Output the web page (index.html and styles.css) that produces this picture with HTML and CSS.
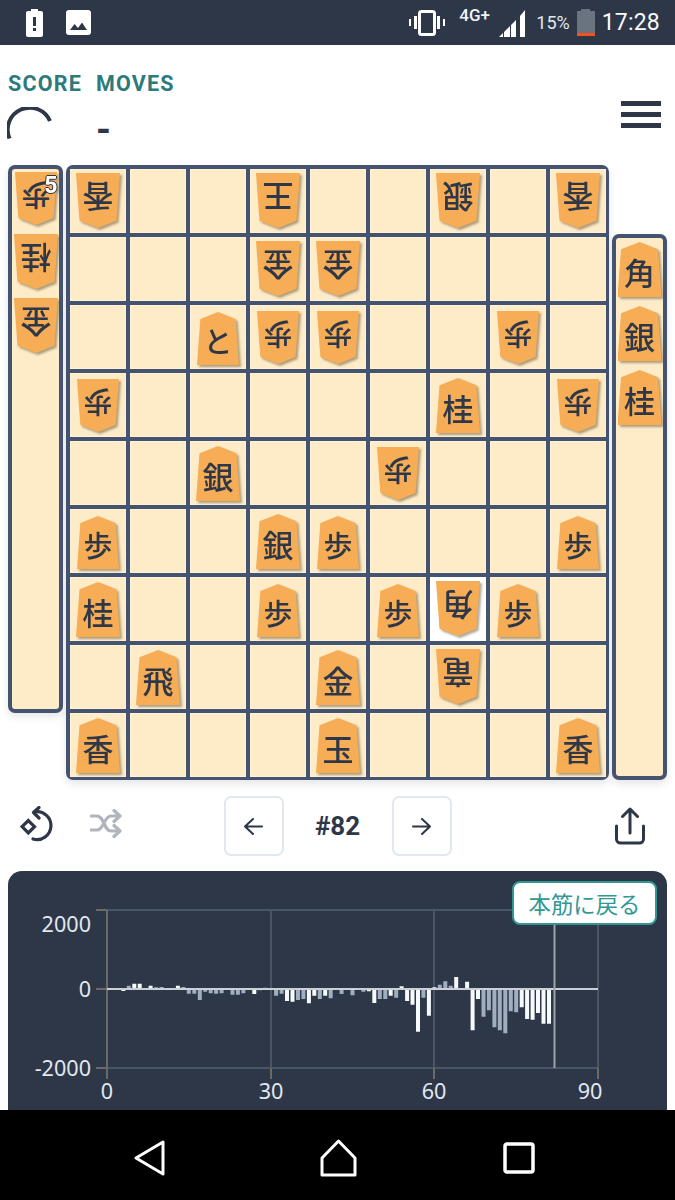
FILE: index.html
```html
<!DOCTYPE html>
<html lang="ja">
<head>
<meta charset="utf-8">
<title>Shogi</title>
<link rel="stylesheet" href="styles.css">
</head>
<body>
<div class="statusbar">
  <svg class="st-alert" width="17" height="28" viewBox="0 0 17 28"><path fill="#fff" d="M5 0h7v2h3a2 2 0 0 1 2 2v22a2 2 0 0 1-2 2H2a2 2 0 0 1-2-2V4a2 2 0 0 1 2-2h3z"/><path fill="#2d3748" d="M7 8h3v9H7zM7 19h3v3H7z"/></svg>
  <svg class="st-image" width="25" height="25" viewBox="0 0 25 25"><rect width="25" height="25" rx="3" fill="#fff"/><path fill="#2d3748" d="M4 20l4.500-6 3.500 4 4-5.500 5 7.500z"/></svg>
  <div class="spacer"></div>
  <svg class="st-vib" width="36" height="27" viewBox="0 0 36 27"><rect x="10.500" y="2.500" width="15" height="23" rx="2" fill="none" stroke="#fff" stroke-width="3"/><path fill="#fff" d="M5 7h3v13H5zM28 7h3v13h-3zM0 10h2v7H0zM34 10h2v7h-2z"/></svg>
  <span class="st-net">4G+</span>
  <svg class="st-signal" width="26" height="27" viewBox="0 0 26 27"><path fill="#fff" d="M0 27l4-4v4zM5 22l6-6v11H5zM12 15l5-5v17h-5zM21 6l5-6v27h-5z"/></svg>
  <span class="st-pct">15%</span>
  <svg class="st-batt" width="18" height="27" viewBox="0 0 18 27"><path fill="#6b7280" d="M4 0h9v2h5v22H0V2h4z"/><path fill="#f4511e" d="M0 24h18v3H0z"/></svg>
  <span class="st-time">17:28</span>
</div>

<header class="header">
  <div class="stats">
    <div class="stat stat-score">
      <div class="stat-label">SCORE</div>
      <svg class="spinner" width="46" height="34" viewBox="0 0 46 34"><path d="M2.500 31.500A22 22 0 0 1 43 14" fill="none" stroke="#2d3748" stroke-width="4"/></svg>
    </div>
    <div class="stat">
      <div class="stat-label">MOVES</div>
      <div class="stat-value">-</div>
    </div>
  </div>
  <div class="burger"><i></i><i></i><i></i></div>
</header>

<main class="game">
  <div class="stand stand-left">
    <div class="piece pawn gote"><span>歩</span><b class="count">5</b></div>
    <div class="piece gote"><span>桂</span></div>
    <div class="piece gote"><span>金</span></div>
  </div>
  <div class="board">
    <div class="cell"><div class="piece gote"><span>香</span></div></div><div class="cell"></div><div class="cell"></div><div class="cell"><div class="piece gote"><span>王</span></div></div><div class="cell"></div><div class="cell"></div><div class="cell"><div class="piece gote"><span>銀</span></div></div><div class="cell"></div><div class="cell"><div class="piece gote"><span>香</span></div></div>
    <div class="cell"></div><div class="cell"></div><div class="cell"></div><div class="cell"><div class="piece gote"><span>金</span></div></div><div class="cell"><div class="piece gote"><span>金</span></div></div><div class="cell"></div><div class="cell"></div><div class="cell"></div><div class="cell"></div>
    <div class="cell"></div><div class="cell"></div><div class="cell"><div class="piece pawn"><span>と</span></div></div><div class="cell"><div class="piece pawn gote"><span>歩</span></div></div><div class="cell"><div class="piece pawn gote"><span>歩</span></div></div><div class="cell"></div><div class="cell"></div><div class="cell"><div class="piece pawn gote"><span>歩</span></div></div><div class="cell"></div>
    <div class="cell"><div class="piece pawn gote"><span>歩</span></div></div><div class="cell"></div><div class="cell"></div><div class="cell"></div><div class="cell"></div><div class="cell"></div><div class="cell"><div class="piece"><span>桂</span></div></div><div class="cell"></div><div class="cell"><div class="piece pawn gote"><span>歩</span></div></div>
    <div class="cell"></div><div class="cell"></div><div class="cell"><div class="piece"><span>銀</span></div></div><div class="cell"></div><div class="cell"></div><div class="cell"><div class="piece pawn gote"><span>歩</span></div></div><div class="cell"></div><div class="cell"></div><div class="cell"></div>
    <div class="cell"><div class="piece pawn"><span>歩</span></div></div><div class="cell"></div><div class="cell"></div><div class="cell"><div class="piece"><span>銀</span></div></div><div class="cell"><div class="piece pawn"><span>歩</span></div></div><div class="cell"></div><div class="cell"></div><div class="cell"></div><div class="cell"><div class="piece pawn"><span>歩</span></div></div>
    <div class="cell"><div class="piece"><span>桂</span></div></div><div class="cell"></div><div class="cell"></div><div class="cell"><div class="piece pawn"><span>歩</span></div></div><div class="cell"></div><div class="cell"><div class="piece pawn"><span>歩</span></div></div><div class="cell cell-hl"><div class="piece gote"><span>角</span></div></div><div class="cell"><div class="piece pawn"><span>歩</span></div></div><div class="cell"></div>
    <div class="cell"></div><div class="cell"><div class="piece"><span>飛</span></div></div><div class="cell"></div><div class="cell"></div><div class="cell"><div class="piece"><span>金</span></div></div><div class="cell"></div><div class="cell"><div class="piece gote"><span>竜</span></div></div><div class="cell"></div><div class="cell"></div>
    <div class="cell"><div class="piece"><span>香</span></div></div><div class="cell"></div><div class="cell"></div><div class="cell"></div><div class="cell"><div class="piece"><span>玉</span></div></div><div class="cell"></div><div class="cell"></div><div class="cell"></div><div class="cell"><div class="piece"><span>香</span></div></div>
  </div>
  <div class="stand stand-right">
    <div class="piece"><span>角</span></div>
    <div class="piece"><span>銀</span></div>
    <div class="piece"><span>桂</span></div>
  </div>
</main>

<nav class="toolbar">
  <div class="tools-left">
    <svg width="36" height="36" viewBox="0 0 36 36" fill="none" stroke="#2d3748" stroke-width="3.200"><path d="M2.100 20.700L8.300 14.500l6.200 6.200-6.200 6.200z"/><path d="M15 5.700A14 14 0 1 1 13 33" stroke-linecap="round"/><path d="M19 1.500L13.500 6.500 19 12" stroke-linecap="round" stroke-linejoin="round"/></svg>
    <svg class="shuffle" width="32" height="30" viewBox="0 0 32 30" fill="none" stroke="#b0b5bc" stroke-width="3.200" stroke-linecap="round" stroke-linejoin="round"><path d="M1 7h6c7 0 7 15 14 15h8M1 21h6c3 0 5-3 7-7s4-7 7-7h8"/><path d="M24 1.500l6 5.500-6 5.500M24 16.500l6 5.500-6 5.500"/></svg>
  </div>
  <div class="pager">
    <button class="page-btn"><svg width="19" height="17" viewBox="0 0 19 17" fill="none" stroke="#2d3748" stroke-width="2" stroke-linecap="round" stroke-linejoin="round"><path d="M1 8.500h17M9 1L1 8.500 9 16"/></svg></button>
    <span class="page-no">#82</span>
    <button class="page-btn"><svg width="19" height="17" viewBox="0 0 19 17" fill="none" stroke="#2d3748" stroke-width="2" stroke-linecap="round" stroke-linejoin="round"><path d="M1 8.500h17M10 1l8 7.500L10 16"/></svg></button>
  </div>
  <svg class="share" width="32" height="38" viewBox="0 0 32 38" fill="none" stroke="#2d3748" stroke-width="3" stroke-linecap="round" stroke-linejoin="round"><path d="M16 2v24M8.500 9.500L16 2l7.500 7.500"/><path d="M2.500 19v13a4 4 0 0 0 4 4h19a4 4 0 0 0 4-4V19"/></svg>
</nav>

<section class="chart">
  <button class="return-btn">本筋に戻る</button>
  <svg class="chart-svg" width="659" height="239" viewBox="8 871 659 239">
    <g class="grid">
      <path d="M107 910H598M107 1068H598M271 910V1068M434 910V1068M598 910V1068"/>
    </g>
    <g class="ticks">
      <path d="M96 910H107M96 989H107M96 1068H107M107 910V1079M271 1068V1079M434 1068V1079M598 1068V1079"/>
    </g>
    <path class="bars-gray" d="M128.800 989V985.700M145.200 989V988M156.100 989V987.300M161.600 989V987M172.500 989V988M183.400 989V987M188.800 989V993.700M194.300 989V993.700M199.800 989V1000M205.200 989V991.700M210.700 989V993.300M216.100 989V993.700M221.600 989V993.300M227 989V988M232.500 989V994.700M237.900 989V994.700M243.400 989V993.300M248.900 989V989.700M259.800 989V990.300M265.200 989V987.700M276.100 989V995.700M281.600 989V993.700M298 989V1000M303.400 989V999M319.800 989V999M330.700 989V998.300M341.600 989V994M352.500 989V995.300M363.400 989V991.700M379.800 989V999M385.300 989V999M396.200 989V997.700M423.400 989V997.700M439.800 989V984.700M445.300 989V981.300M450.700 989V985.700M483.500 989V1016.700M488.900 989V1010.300M494.400 989V1027.300M499.800 989V1030.300M505.300 989V1033.300M510.800 989V1011.300M516.200 989V1012.300"/>
    <path class="bars-white" d="M112.500 989V989.500M123.400 989V991M134.300 989V983.700M139.700 989V983.700M150.600 989V985.700M177.900 989V985.700M254.300 989V994M287 989V1001M292.500 989V1001.700M308.900 989V1003.300M314.300 989V995.700M325.200 989V995.700M368.900 989V991.300M374.300 989V1003M390.700 989V995.700M401.600 989V986.300M407.100 989V1001M412.500 989V1004.700M418 989V1031.700M428.900 989V1015.700M434.400 989V987.300M456.200 989V977M467.100 989V981.700M472.600 989V1030.300M478 989V999M521.700 989V1007.300M527.100 989V1019M532.600 989V1019.700M538 989V1013M543.500 989V1023.700M549 989V1023.700"/>
    <path class="zero" d="M107 989H598"/>
    <path class="marker" d="M554.500 910V1068"/>
    <g class="ylabels">
      <text x="91" y="932">2000</text>
      <text x="91" y="997">0</text>
      <text x="91" y="1076">-2000</text>
    </g>
    <g class="xlabels">
      <text x="107" y="1099">0</text>
      <text x="271" y="1099">30</text>
      <text x="434" y="1099">60</text>
      <text x="590" y="1099">90</text>
    </g>
  </svg>
</section>

<footer class="navbar">
  <svg width="32" height="36" viewBox="0 0 32 36" fill="none" stroke="#fff" stroke-width="3" stroke-linejoin="round"><path d="M3 18L30 2v32z"/></svg>
  <svg class="nav-home" width="39" height="38" viewBox="0 0 39 38" fill="none" stroke="#fff" stroke-width="3" stroke-linejoin="round"><path d="M19.500 2L36 19v17H3V19z"/></svg>
  <svg width="32" height="32" viewBox="0 0 32 32" fill="none" stroke="#fff" stroke-width="3.500"><rect x="2" y="2" width="28" height="28" rx="2"/></svg>
</footer>
</body>
</html>
```

FILE: styles.css
```css
* { box-sizing: border-box; }
html, body { margin: 0; padding: 0; }
body {
  width: 675px;
  height: 1200px;
  overflow: hidden;
  background: #fff;
  color: #2d3748;
  font-family: Roboto, "Noto Sans CJK JP", sans-serif;
}

/* status bar */
.statusbar {
  height: 45px;
  background: #2d3748;
  color: #fff;
  display: flex;
  align-items: flex-start;
  padding: 9px 15px 0 26px;
}
.statusbar svg { display: block; flex: none; }
.st-image { margin: 1px 0 0 23px; }
.spacer { flex: 1; }
.st-net { margin: -4px 0 0 14px; font-size: 17px; font-weight: 500; line-height: 20px; color: #f1f5f9; width: 33px; white-space: nowrap; }
.st-signal { margin: 1px 0 0 7px; }
.st-pct { margin: 2px 0 0 11px; font-size: 18px; line-height: 24px; color: #e2e8f0; }
.st-batt { margin: 0 0 0 7px; }
.st-time { margin: 0 0 0 7px; font-size: 23px; line-height: 28px; letter-spacing: .2px; color: #f8fafc; }

/* header */
.header {
  height: 120px;
  display: flex;
  justify-content: space-between;
  padding: 0 14px 0 8px;
}
.stats { display: flex; gap: 14px; padding-top: 26px; }
.stat-label {
  color: #2c7a7b;
  font-size: 21.500px;
  font-weight: 700;
  line-height: 26px;
  letter-spacing: 1.200px;
}
.spinner { display: block; margin-top: 10px; margin-left: -1px; }
.stat-value { font-size: 38px; font-weight: 700; line-height: 38px; margin-top: 14px; }
.burger { display: flex; flex-direction: column; gap: 6.500px; width: 40px; padding-top: 56px; }
.burger i { display: block; height: 4.500px; background: #2d3748; }

/* game */
.game {
  display: flex;
  gap: 3px;
  padding: 0 8px;
  height: 615px;
}
.stand {
  position: relative;
  width: 55px;
  background: #feebc8;
  border: 4px solid #445470;
  border-radius: 7px;
  display: flex;
  flex-direction: column;
  align-items: center;
  gap: 9px;
  box-shadow: 0 4px 8px rgba(0, 0, 0, .1);
}
.stand-left { height: 548px; padding-top: 3px; }
.stand-right { height: 546px; margin-top: auto; padding-top: 4px; }
.board {
  width: 543px;
  height: 615px;
  padding: 4px 3px 3px 4px;
  background: #445470;
  border-radius: 7px;
  display: grid;
  grid-template-columns: repeat(9, 56px);
  grid-template-rows: repeat(9, 64px);
  gap: 4px;
  box-shadow: 0 4px 8px rgba(0, 0, 0, .1);
}
.cell {
  background: #feebc8;
  box-shadow: inset 0 0 0 1px #fff1d6;
  display: flex;
  justify-content: center;
  align-items: flex-end;
  min-width: 0;
}
.cell-hl { background: #fff; box-shadow: none; }
.cell .piece { margin-bottom: 4px; }
.cell .piece.gote { margin-bottom: 5px; }

.piece {
  position: relative;
  width: 44px;
  height: 55px;
  flex: none;
  filter: drop-shadow(2px 2px 1px rgba(90, 80, 50, .5));
}
.piece.pawn { width: 42px; height: 53px; }
.piece span {
  display: flex;
  align-items: center;
  justify-content: center;
  width: 100%;
  height: 100%;
  padding-top: 4px;
  background: #f6ad55;
  clip-path: polygon(50% 0, 92% 13%, 100% 100%, 0 100%, 8% 13%);
  font-family: "Noto Sans CJK JP", sans-serif;
  font-size: 31px;
  font-weight: 500;
  line-height: 1;
  color: #2d3748;
}
.piece.pawn span { font-size: 29px; }
.piece.gote span { transform: rotate(180deg); }
.count {
  position: absolute;
  top: 1px;
  right: -1px;
  font-family: Roboto, sans-serif;
  font-size: 23px;
  line-height: 26px;
  font-weight: 700;
  color: #fff;
  text-shadow: -1px 0 #2d3748, 1px 0 #2d3748, 0 -1px #2d3748, 0 1px #2d3748;
}

/* toolbar */
.toolbar {
  height: 91px;
  display: grid;
  grid-template-columns: 1fr auto 1fr;
  align-items: start;
  padding: 16px 20px 0;
}
.toolbar svg { display: block; }
.tools-left { display: flex; align-items: center; gap: 34px; padding-top: 10px; }
.pager { display: flex; align-items: center; }
.page-btn {
  width: 60px;
  height: 60px;
  padding: 0;
  background: #fff;
  border: 2px solid #e2e8f0;
  border-radius: 7px;
  display: flex;
  align-items: center;
  justify-content: center;
}
.page-no { width: 108px; text-align: center; font-size: 26px; font-weight: 700; color: #2d3748; }
.share { justify-self: end; margin: 11px 9px 0 0; }

/* chart */
.chart {
  position: relative;
  height: 239px;
  margin: 0 8px;
  background: #2d3748;
  border-radius: 14px 14px 0 0;
  overflow: hidden;
}
.chart-svg { display: block; }
.grid path { stroke: #4a5568; stroke-width: 2; fill: none; }
.ticks path { stroke: #6b6a66; stroke-width: 2; fill: none; }
.bars-gray { stroke: #a0aec0; stroke-width: 4; fill: none; }
.bars-white { stroke: #f7fafc; stroke-width: 4; fill: none; }
.zero { stroke: #cbd0d6; stroke-width: 2; fill: none; }
.marker { stroke: #a0a3a8; stroke-width: 2; fill: none; }
.ylabels text, .xlabels text {
  font-family: "Noto Sans", sans-serif;
  font-size: 21.600px;
  fill: #e2e8f0;
}
.ylabels text { text-anchor: end; }
.xlabels text { text-anchor: middle; }
.return-btn {
  position: absolute;
  top: 10px;
  right: 10px;
  z-index: 1;
  width: 145px;
  height: 44px;
  padding: 0;
  background: #fff;
  border: 2px solid #319795;
  border-radius: 8px;
  color: #319795;
  font-family: "Noto Sans CJK JP", sans-serif;
  font-size: 22.400px;
}

/* android nav */
.navbar {
  height: 90px;
  background: #000;
  display: flex;
  align-items: center;
  justify-content: space-between;
  padding: 5px 140px 0 133px;
}
.navbar svg { display: block; }
.nav-home { margin-left: 8px; }
```
